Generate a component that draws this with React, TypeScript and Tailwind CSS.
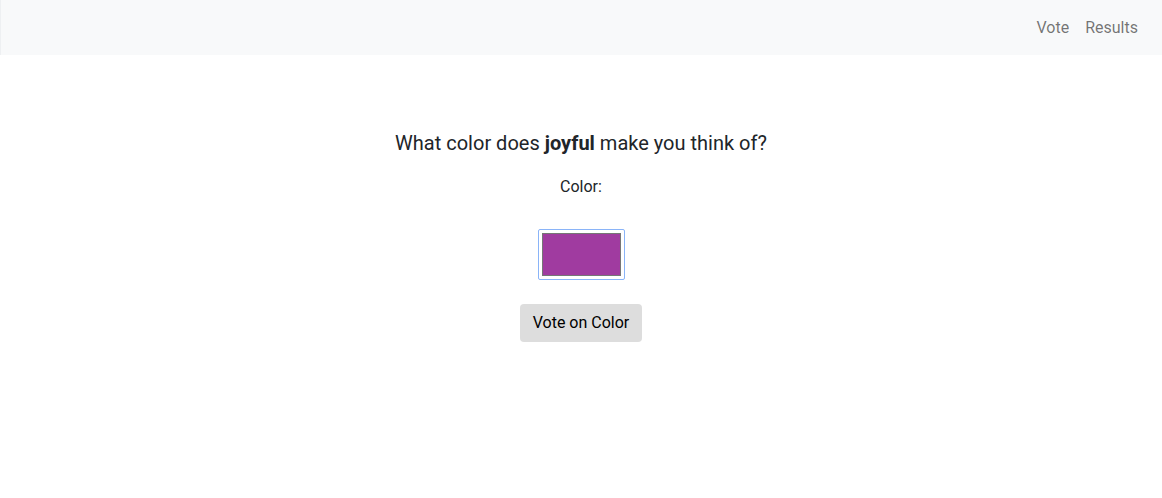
import React, { useState } from 'react';

const App: React.FC = () => {
  const [color, setColor] = useState('#a03ba0');

  return (
    <div className="min-h-screen bg-white text-[#212529]" style={{ fontFamily: 'Roboto, "Liberation Sans", sans-serif' }}>
      <nav className="h-[55px] bg-[#f8f9fa] border-l border-[#eef0f2] flex items-center justify-end pr-[24px]">
        <div className="flex gap-[16px] text-[16px] text-black/55 pt-[1px]">
          <a href="#" className="hover:text-black/70">Vote</a>
          <a href="#" className="hover:text-black/70">Results</a>
        </div>
      </nav>

      <main className="flex flex-col items-center pt-[76px]">
        <h1 className="text-[20px] leading-[24px]">
          What color does <strong className="font-bold">joyful</strong> make you think of?
        </h1>
        <label className="mt-[22px] text-[16px] leading-[19px]">Color:</label>
        <div className="mt-[33px] w-[87px] h-[51px] border border-[#8ab4f8] rounded-[2px] p-[3px]">
          <div className="w-full h-full border border-[#767676]" style={{ background: color }}>
            <input
              type="color"
              value={color}
              onChange={(e) => setColor(e.target.value)}
              className="opacity-0 w-full h-full cursor-pointer"
            />
          </div>
        </div>
        <button className="mt-[24px] h-[38px] px-[13px] bg-[#dddddd] rounded-[4px] text-[16px] text-black">
          Vote on Color
        </button>
      </main>
    </div>
  );
};

export default App;
